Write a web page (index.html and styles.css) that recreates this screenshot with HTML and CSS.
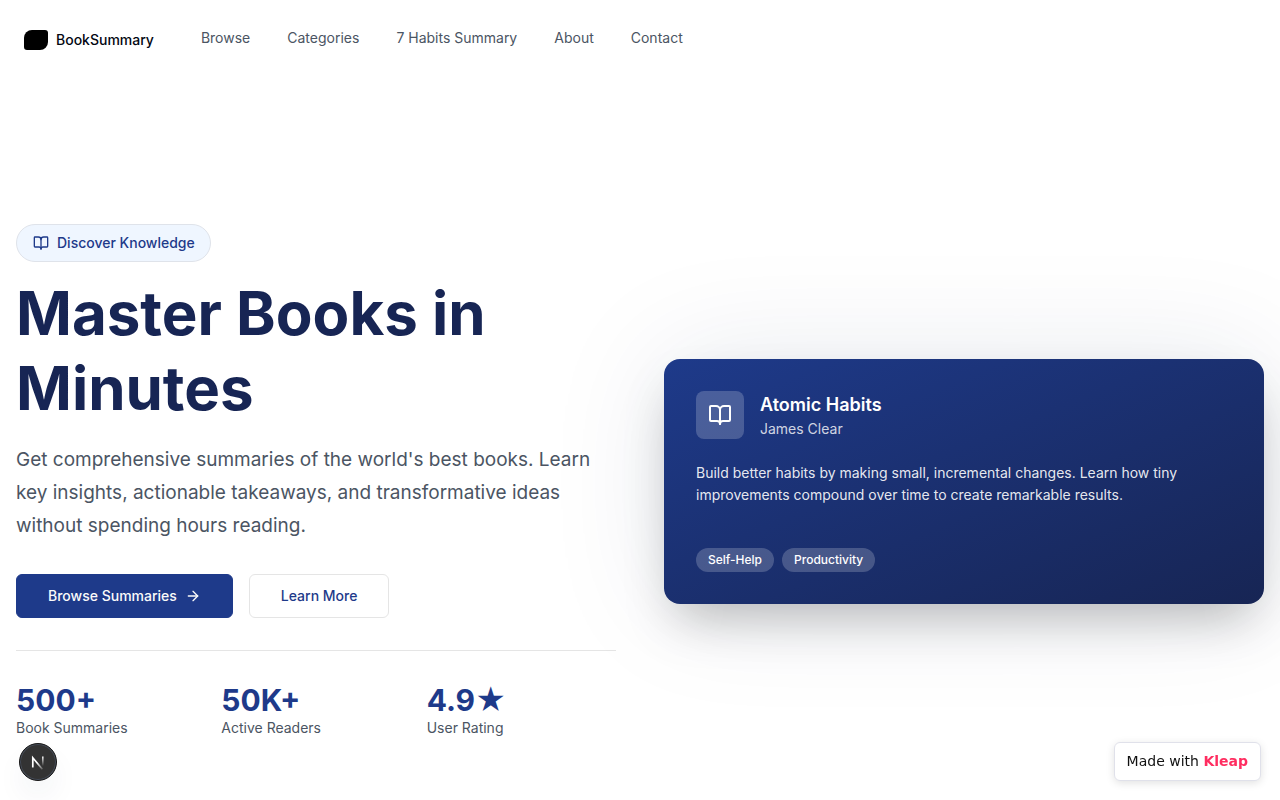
FILE: index.html
```html
<!DOCTYPE html>
<html lang="en">
<head>
<meta charset="utf-8">
<meta name="viewport" content="width=device-width, initial-scale=1">
<title>BookSummary</title>
<link rel="stylesheet" href="styles.css">
</head>
<body>
<header class="navbar">
  <a class="brand" href="#">
    <span class="brand-mark"></span>
    <span>BookSummary</span>
  </a>
  <nav class="nav-links">
    <a href="#">Browse</a>
    <a href="#">Categories</a>
    <a href="#">7 Habits Summary</a>
    <a href="#">About</a>
    <a href="#">Contact</a>
  </nav>
</header>

<main class="hero">
  <section class="intro">
    <div class="badge">
      <svg class="icon" width="16" height="16" viewBox="0 0 24 24"><path d="M12 7v14"/><path d="M3 18a1 1 0 0 1-1-1V4a1 1 0 0 1 1-1h5a4 4 0 0 1 4 4 4 4 0 0 1 4-4h5a1 1 0 0 1 1 1v13a1 1 0 0 1-1 1h-6a3 3 0 0 0-3 3 3 3 0 0 0-3-3z"/></svg>
      <span>Discover Knowledge</span>
    </div>
    <h1 class="title">Master Books in Minutes</h1>
    <p class="lead">Get comprehensive summaries of the world's best books. Learn key insights, actionable takeaways, and transformative ideas without spending hours reading.</p>
    <div class="actions">
      <button class="button button-primary" type="button">
        <span>Browse Summaries</span>
        <svg class="icon" width="16" height="16" viewBox="0 0 24 24"><path d="M5 12h14"/><path d="m12 5 7 7-7 7"/></svg>
      </button>
      <button class="button button-outline" type="button">Learn More</button>
    </div>
    <div class="stats">
      <div><div class="stat-value">500+</div><div class="stat-label">Book Summaries</div></div>
      <div><div class="stat-value">50K+</div><div class="stat-label">Active Readers</div></div>
      <div><div class="stat-value">4.9★</div><div class="stat-label">User Rating</div></div>
    </div>
  </section>

  <article class="book-card">
    <div class="book-head">
      <div class="book-icon">
        <svg class="icon" width="24" height="24" viewBox="0 0 24 24"><path d="M12 7v14"/><path d="M3 18a1 1 0 0 1-1-1V4a1 1 0 0 1 1-1h5a4 4 0 0 1 4 4 4 4 0 0 1 4-4h5a1 1 0 0 1 1 1v13a1 1 0 0 1-1 1h-6a3 3 0 0 0-3 3 3 3 0 0 0-3-3z"/></svg>
      </div>
      <div>
        <h2 class="book-title">Atomic Habits</h2>
        <div class="book-author">James Clear</div>
      </div>
    </div>
    <p class="book-text">Build better habits by making small, incremental changes. Learn how tiny improvements compound over time to create remarkable results.</p>
    <div class="tags">
      <span class="tag">Self-Help</span>
      <span class="tag">Productivity</span>
    </div>
  </article>
</main>

<button class="dev-badge" type="button" aria-label="Open developer tools">
  <svg width="36" height="36" viewBox="0 0 36 36" fill="none">
    <defs>
      <linearGradient id="diagonal" x1="18" y1="18" x2="24" y2="25" gradientUnits="userSpaceOnUse"><stop stop-color="#fff"/><stop offset="1" stop-color="#fff" stop-opacity="0.1"/></linearGradient>
      <linearGradient id="stem" x1="23" y1="12" x2="23" y2="22" gradientUnits="userSpaceOnUse"><stop stop-color="#fff"/><stop offset="1" stop-color="#fff" stop-opacity="0"/></linearGradient>
    </defs>
    <path d="M12.8 23.5V13.8l9.6 11.4" stroke="url(#diagonal)" stroke-width="1.7"/>
    <path d="M22.8 12.5v9.5" stroke="url(#stem)" stroke-width="1.6"/>
  </svg>
</button>
<a class="maker" href="#">Made with <strong>Kleap</strong></a>
</body>
</html>
```

FILE: styles.css
```css
* {
  box-sizing: border-box;
}

body {
  margin: 0;
  min-height: 100vh;
  overflow-x: hidden;
  background: #fff;
  color: #030712;
  font-family: Inter, "Liberation Sans", sans-serif;
  font-size: 14px;
  line-height: 20px;
}

h1, h2, p {
  margin: 0;
}

a {
  color: inherit;
  text-decoration: none;
}

button {
  font: inherit;
  cursor: pointer;
}

.icon {
  flex: none;
  fill: none;
  stroke: currentColor;
  stroke-width: 2;
  stroke-linecap: round;
  stroke-linejoin: round;
}

.navbar {
  display: flex;
  align-items: flex-start;
  gap: 47px;
  padding: 28px 24px;
}

.brand {
  display: flex;
  align-items: center;
  gap: 8px;
  font-weight: 500;
  padding-top: 2px;
}

.brand-mark {
  width: 24px;
  height: 20px;
  background: #000;
  border-radius: 8px 3px;
}

.nav-links {
  display: flex;
  gap: 37px;
  color: #4b5563;
}

.hero {
  display: grid;
  grid-template-columns: 1fr 1fr;
  gap: 48px;
  align-items: center;
  padding: 146px 16px 60px;
}

.intro {
  display: flex;
  flex-direction: column;
  align-items: flex-start;
}

.badge {
  display: flex;
  align-items: center;
  gap: 8px;
  padding: 8px 15px 8px 16px;
  border: 1px solid #dfe3ea;
  border-radius: 20px;
  background: #eff6ff;
  color: #1e3a8a;
  font-weight: 500;
}

.title {
  margin-top: 14px;
  color: #172554;
  font-size: 60px;
  line-height: 75px;
  font-weight: 700;
}

.lead {
  margin-top: 17px;
  color: #4b5563;
  font-size: 19px;
  line-height: 33px;
}

.actions {
  display: flex;
  gap: 16px;
  margin-top: 32px;
}

.button {
  display: flex;
  align-items: center;
  gap: 8px;
  height: 44px;
  padding: 0 31px;
  border: 1px solid #e5e5e5;
  border-radius: 6px;
  font-weight: 500;
}

.button-primary {
  border-color: #1e3a8a;
  background: #1e3a8a;
  color: #fafafa;
}

.button-outline {
  background: #fff;
  color: #1e3a8a;
}

.stats {
  display: grid;
  grid-template-columns: repeat(3, 1fr);
  gap: 16px;
  align-self: stretch;
  margin-top: 32px;
  padding-top: 32px;
  border-top: 1px solid #e5e5e5;
}

.stat-value {
  color: #1e3a8a;
  font-size: 30px;
  line-height: 35px;
  font-weight: 700;
}

.stat-label {
  color: #4b5563;
}

.book-card {
  padding: 32px;
  border-radius: 16px;
  background: linear-gradient(to bottom right, #1e3a8a, #172554);
  color: #fff;
  box-shadow: 0 25px 50px -12px rgba(0, 0, 0, 0.25), 0 0 120px rgba(23, 37, 84, 0.1);
}

.book-head {
  display: flex;
  align-items: center;
  gap: 16px;
}

.book-icon {
  display: grid;
  place-items: center;
  width: 48px;
  height: 48px;
  border-radius: 8px;
  background: rgba(255, 255, 255, 0.2);
}

.book-title {
  font-size: 18px;
  line-height: 28px;
  font-weight: 600;
}

.book-author {
  color: rgba(255, 255, 255, 0.8);
}

.book-text {
  margin-top: 23px;
  color: rgba(255, 255, 255, 0.9);
  line-height: 22px;
}

.tags {
  display: flex;
  gap: 8px;
  margin-top: 42px;
}

.tag {
  padding: 4px 12px;
  border-radius: 12px;
  background: rgba(255, 255, 255, 0.2);
  font-size: 12px;
  line-height: 16px;
  font-weight: 500;
}

.dev-badge {
  position: fixed;
  left: 19px;
  bottom: 19px;
  display: grid;
  place-items: center;
  width: 38px;
  height: 38px;
  padding: 0;
  border: 1px solid #171717;
  border-radius: 50%;
  background: #333;
  box-shadow: inset 0 0 0 1px #454c58, 0 16px 32px -8px rgba(30, 50, 90, 0.14);
}

.maker {
  position: fixed;
  right: 19px;
  bottom: 19px;
  padding: 8px 12px 9px;
  border: 1px solid #e0e1ea;
  border-radius: 6px;
  background: #fff;
  color: #111;
  font-family: "DejaVu Sans", sans-serif;
  box-shadow: 0 2px 8px rgba(0, 0, 0, 0.12);
}

.maker strong {
  color: #ff2d60;
}
```
